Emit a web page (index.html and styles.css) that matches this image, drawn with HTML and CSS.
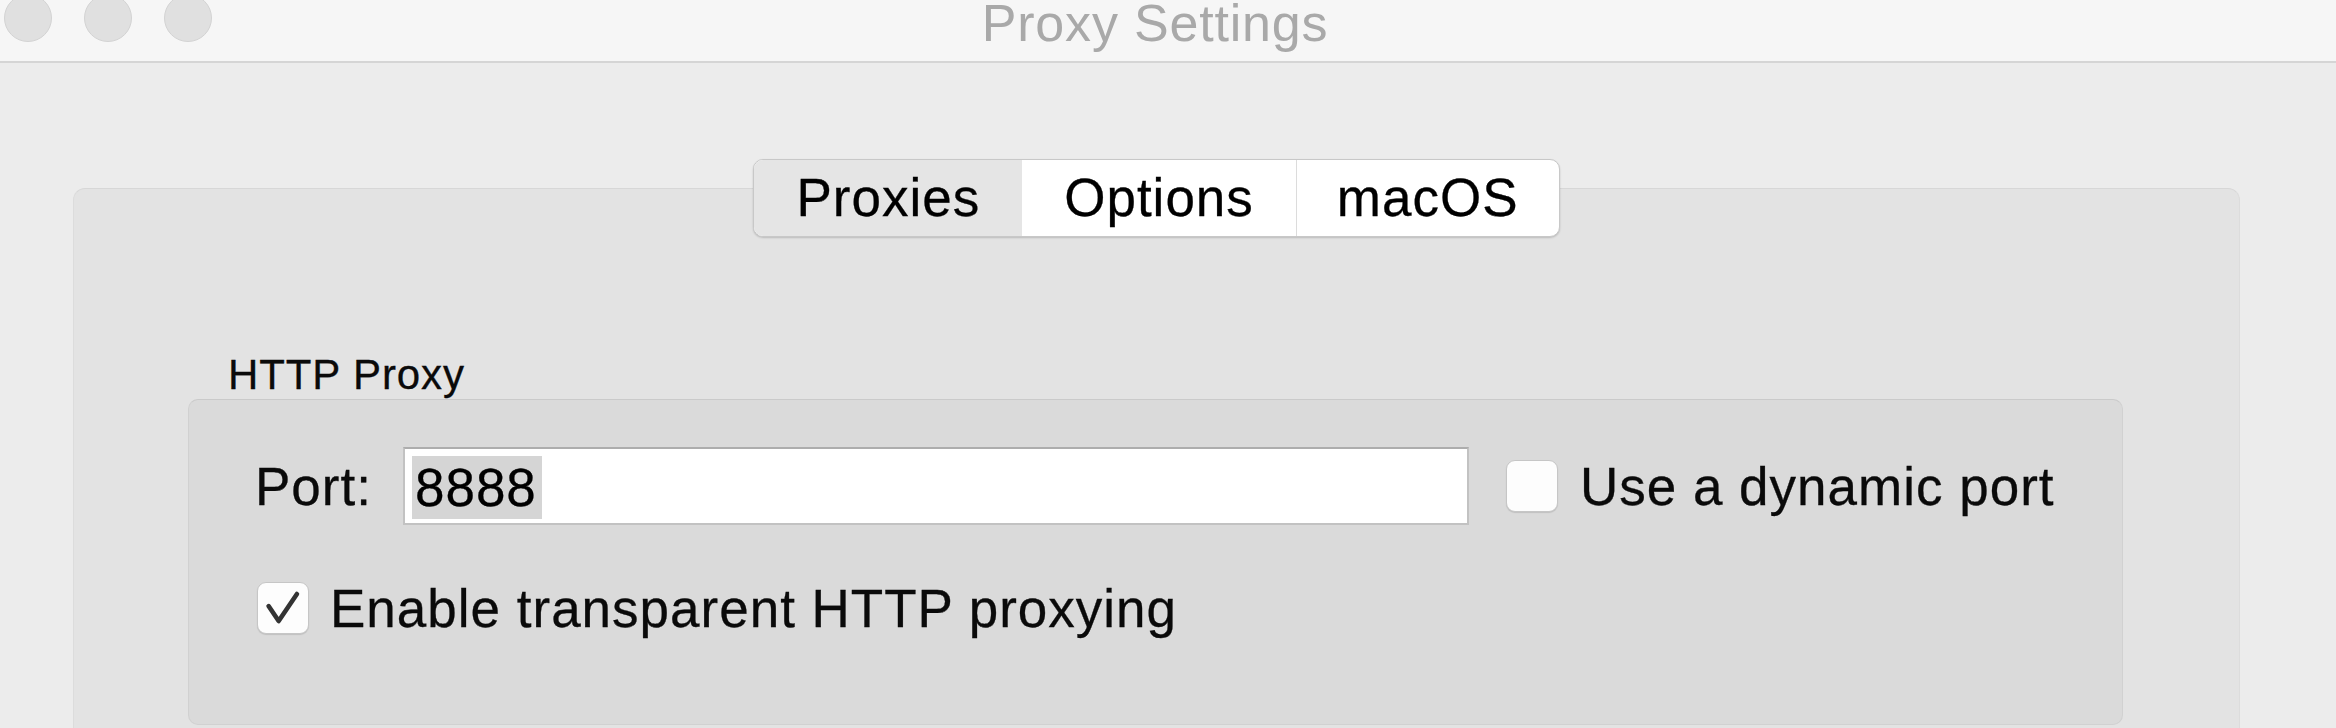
FILE: index.html
```html
<!DOCTYPE html>
<html lang="en">
<head>
<meta charset="utf-8">
<title>Proxy Settings</title>
<link rel="stylesheet" href="styles.css">
</head>
<body>
<div class="window">
  <header class="titlebar">
    <div class="lights">
      <span class="light"></span>
      <span class="light"></span>
      <span class="light"></span>
    </div>
    <div class="title">Proxy Settings</div>
    <div class="titlebar-spacer"></div>
  </header>
  <main class="content">
    <nav class="tabs">
      <span class="tab tab-selected">Proxies</span>
      <span class="tab">Options</span>
      <span class="tab tab-last">macOS</span>
    </nav>
    <section class="panel">
      <div class="group-label">HTTP Proxy</div>
      <div class="group">
        <div class="row row-port">
          <span class="field-label">Port:</span>
          <div class="textfield"><span class="selection">8888</span></div>
          <span class="checkbox checkbox-port"></span>
          <span class="check-label">Use a dynamic port</span>
        </div>
        <div class="row row-transparent">
          <span class="checkbox checkbox-checked">
            <svg viewBox="0 0 52 52" width="52" height="52" aria-hidden="true">
              <path d="M11 24 L21.5 39.5 L40.5 11.5" fill="none" stroke="#333333" stroke-width="4.8" stroke-linecap="round" stroke-linejoin="round"/>
            </svg>
          </span>
          <span class="check-label">Enable transparent HTTP proxying</span>
        </div>
      </div>
    </section>
  </main>
</div>
</body>
</html>
```

FILE: styles.css
```css
html, body {
  margin: 0;
  padding: 0;
}

body {
  width: 2336px;
  height: 728px;
  overflow: hidden;
  background: #ececec;
  font-family: "Liberation Sans", Arial, Helvetica, sans-serif;
  color: #0a0a0a;
}

.window {
  width: 2336px;
  height: 728px;
}

/* ---------- title bar ---------- */
.titlebar {
  height: 61px;
  background: #f6f6f6;
  border-bottom: 2px solid #d5d5d5;
  display: grid;
  grid-template-columns: 1fr auto 1fr;
  align-items: start;
  padding-right: 26px;
  overflow: hidden;
}

.lights {
  display: flex;
  gap: 32px;
  margin: -6px 0 0 4px;
}

.light {
  width: 46px;
  height: 46px;
  border-radius: 50%;
  background: #e0e0e0;
  border: 1px solid #d3d3d3;
}

.title {
  font-size: 52px;
  line-height: 46px;
  letter-spacing: 0.8px;
  color: #a9a9a9;
  white-space: nowrap;
}

/* ---------- content ---------- */
.content {
  padding: 96px 96px 0 73px;
}

.tabs {
  display: flex;
  width: max-content;
  margin: 0 auto;
  position: relative;
  z-index: 1;
  background: #ffffff;
  border: 1px solid #c8c8c8;
  border-radius: 10px;
  overflow: hidden;
  box-shadow: 0 1px 2px rgba(0, 0, 0, 0.18);
}

.tab {
  padding: 0 42px;
  height: 76px;
  line-height: 76px;
  font-size: 53px;
  letter-spacing: 1px;
  color: #000;
  white-space: nowrap;
  -webkit-text-stroke: 0.3px currentColor;
}

.tab-selected {
  background: #e5e5e5;
}

.tab-last {
  padding: 0 40px;
  border-left: 1px solid #dcdcdc;
}

.panel {
  margin-top: -49px;
  background: #e3e3e3;
  border: 1px solid #dcdcdc;
  border-top-color: #d7d7d7;
  border-radius: 12px;
  padding: 165px 116px 0 114px;
  height: 620px;
  box-sizing: border-box;
}

.group-label {
  font-size: 42px;
  line-height: 41px;
  letter-spacing: 0.9px;
  margin: 0 0 4px 40px;
  white-space: nowrap;
  -webkit-text-stroke: 0.3px currentColor;
}

.group {
  background: #dadada;
  border: 1px solid #d1d1d1;
  border-top-color: #cacaca;
  border-radius: 10px;
  padding: 47px 0 0 66px;
  height: 326px;
  box-sizing: border-box;
}

.row {
  display: flex;
  align-items: center;
}

.row-port {
  height: 78px;
}

.row-transparent {
  margin-top: 56px;
  height: 54px;
  padding-left: 2px;
}

.field-label,
.check-label {
  font-size: 53px;
  line-height: 53px;
  letter-spacing: 1px;
  white-space: nowrap;
  -webkit-text-stroke: 0.3px currentColor;
}

.field-label {
  margin-right: 31px;
}

.textfield {
  width: 1066px;
  height: 78px;
  box-sizing: border-box;
  background: #ffffff;
  border: 2px solid #c2c2c2;
  border-top-color: #adadad;
  padding: 7px 0 0 7px;
}

.selection {
  display: inline-block;
  height: 63px;
  line-height: 63px;
  padding: 0 5px 0 3px;
  background: #d5d5d5;
  font-size: 53px;
  letter-spacing: 1px;
  color: #000;
  -webkit-text-stroke: 0.3px currentColor;
}

.checkbox {
  width: 52px;
  height: 52px;
  box-sizing: border-box;
  background: #fdfdfd;
  border: 1px solid #c6c6c6;
  border-radius: 9px;
  box-shadow: 0 1px 1px rgba(0, 0, 0, 0.12);
  flex: none;
  display: flex;
  align-items: center;
  justify-content: center;
}

.checkbox svg {
  display: block;
}

.checkbox-port {
  margin-left: 37px;
  margin-right: 22px;
}

.checkbox-checked {
  margin-right: 21px;
}
```
